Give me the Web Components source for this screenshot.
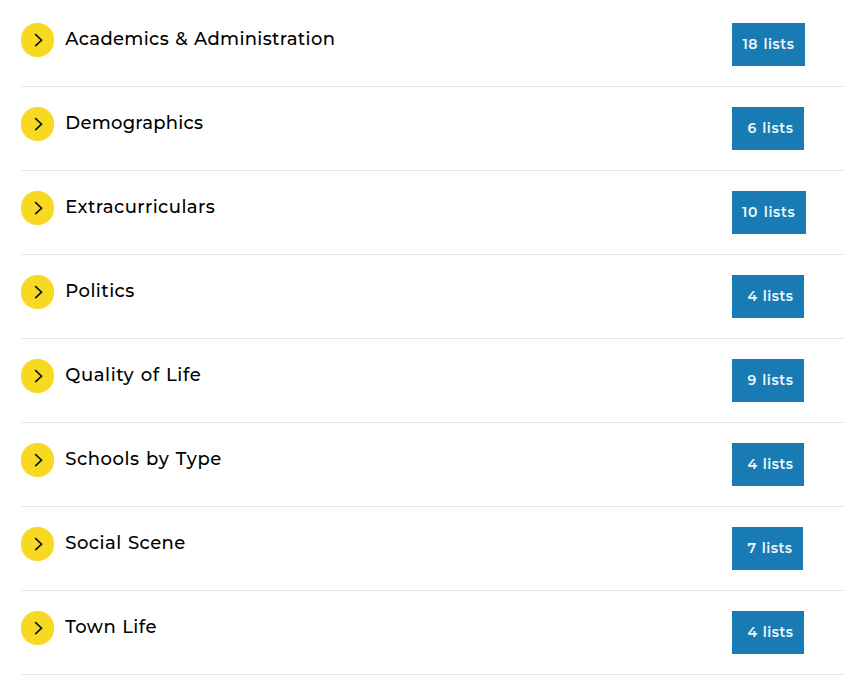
<!DOCTYPE html>
<html lang="en">
<head>
<meta charset="UTF-8">
<title>Lists</title>
<style>
  body {
    margin: 0;
    background: #fff;
  }
</style>
</head>
<body>
<category-list>
  <category-row count="18" label-width="270" badge-width="73" text-width="52">Academics &amp; Administration</category-row>
  <category-row count="6" label-width="138" badge-width="72" text-width="46">Demographics</category-row>
  <category-row count="10" label-width="150" badge-width="74" text-width="53.5">Extracurriculars</category-row>
  <category-row count="4" label-width="69.5" badge-width="72" text-width="46">Politics</category-row>
  <category-row count="9" label-width="136" badge-width="72" text-width="46">Quality of Life</category-row>
  <category-row count="4" label-width="156.5" badge-width="72" text-width="46">Schools by Type</category-row>
  <category-row count="7" label-width="120.5" badge-width="71" text-width="45">Social Scene</category-row>
  <category-row count="4" label-width="91.5" badge-width="72" text-width="46">Town Life</category-row>
</category-list>

<script>
// Fits a text to a width with letter-spacing
function fitText(el, text, width) {
  el.style.letterSpacing = '0px';
  const natural = el.getBoundingClientRect().width;
  el.style.letterSpacing = (width - natural) / text.length + 'px';
}

class CategoryList extends HTMLElement {
  constructor() {
    super();
    this.attachShadow({ mode: 'open' });
    this.shadowRoot.innerHTML = `
      <style>
        :host {
          display: block;
          padding: 3px 21px 0;
          font-family: Montserrat, Gotham, Lato, sans-serif;
          color: #000;
        }
      </style>
      <slot></slot>
    `;
  }
}

class CategoryRow extends HTMLElement {
  constructor() {
    super();
    this.attachShadow({ mode: 'open' });
  }

  connectedCallback() {
    this.render();
  }

  render() {
    this.shadowRoot.innerHTML = `
      <style>
        :host {
          display: flex;
          align-items: flex-start;
          box-sizing: border-box;
          width: 823px;
          height: 84px;
          padding-top: 20px;
          border-bottom: 1px solid #e6e6e6;
        }

        svg {
          flex: none;
          width: 33px;
          height: 34px;
        }

        .label {
          flex: 1;
          margin-left: 11.3px;
          font-size: 18px;
          font-weight: 500;
          line-height: 32px;
          word-spacing: 1px;
          white-space: nowrap;
        }

        list-count {
          margin-right: 39px;
        }
      </style>

      <svg viewBox="0 0 33 34">
        <rect width="33" height="34" rx="16" ry="16" fill="#f8d922"/>
        <path d="M14.2 11.2l6.3 6-6.3 6" fill="none" stroke="#111" stroke-width="1.6"/>
      </svg>
      <div class="label"><span><slot></slot></span></div>
      <list-count value="${this.getAttribute('count')}" width="${this.getAttribute('badge-width')}" text-width="${this.getAttribute('text-width')}"></list-count>
    `;
    fitText(this.shadowRoot.querySelector('.label span'), this.textContent, Number(this.getAttribute('label-width')));
  }
}

class ListCount extends HTMLElement {
  constructor() {
    super();
    this.attachShadow({ mode: 'open' });
  }

  connectedCallback() {
    const text = this.getAttribute('value') + ' lists';
    this.shadowRoot.innerHTML = `
      <style>
        :host {
          display: block;
          width: 73px;
          font-size: 14px;
          font-weight: 600;
          line-height: 43px;
          color: #eef6fb;
        }

        .box {
          box-sizing: border-box;
          width: ${this.getAttribute('width')}px;
          height: 43px;
          padding-right: 10.5px;
          background: #187bb4;
          text-align: right;
          word-spacing: 1px;
          white-space: nowrap;
        }
      </style>
      <div class="box"><span>${text}</span></div>
    `;
    fitText(this.shadowRoot.querySelector('span'), text, Number(this.getAttribute('text-width')));
  }
}

customElements.define('category-list', CategoryList);
customElements.define('list-count', ListCount);
customElements.define('category-row', CategoryRow);
</script>
</body>
</html>
